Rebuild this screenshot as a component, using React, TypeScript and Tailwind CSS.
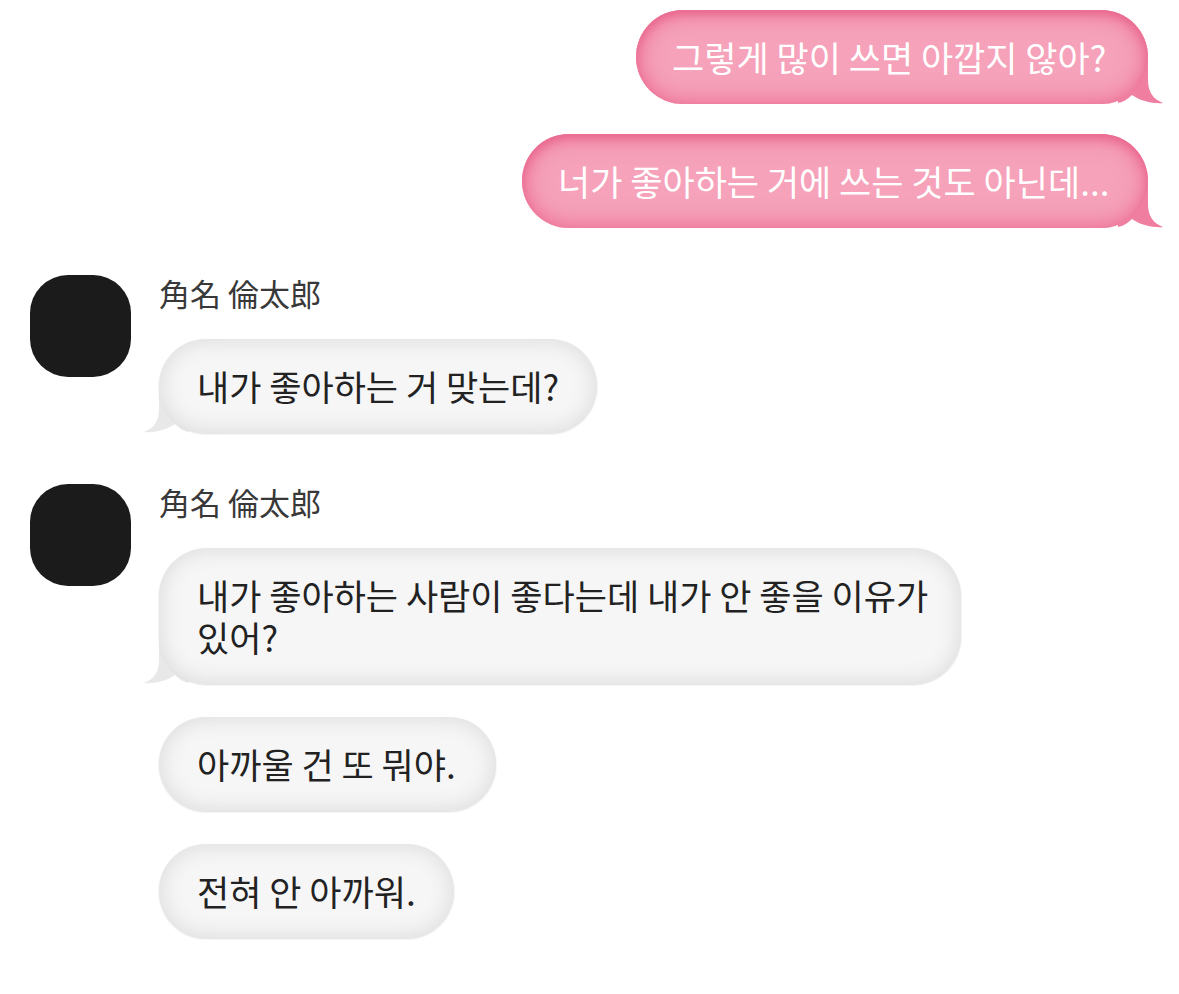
import React from "react";

const KR = "font-['Noto_Sans_CJK_KR','Noto_Sans',sans-serif]";

type Side = "left" | "right";

function Tail({ side, color }: { side: Side; color: string }) {
  // tail sits over the bubble's lower corner
  return (
    <svg
      width="45"
      height="50"
      viewBox="0 0 45 50"
      className={
        side === "right"
          ? "absolute right-[-15px] bottom-0"
          : "absolute left-[-15px] bottom-0 -scale-x-100"
      }
    >
      <path d="M0,0 L30,0 L30,26 C30,38 35,45 45,49 C36,50 22,47 14,41 C10,45 5,48 0,49 Z" fill={color} />
    </svg>
  );
}

function PinkBubble({ text, width }: { text: string; width: string }) {
  return (
    <div className={`relative ${width}`}>
      <Tail side="right" color="#ef7ea0" />
      <div
        className={`relative rounded-full bg-[#f5a2ba] shadow-[inset_0_4px_10px_#e8668d,inset_0_0_22px_4px_#ee7599] py-[26px] pl-[36px] text-[35px] leading-[42px] text-white whitespace-nowrap ${KR}`}
      >
        {text}
      </div>
    </div>
  );
}

function GrayBubble({
  children,
  width,
  tail = false,
}: {
  children: React.ReactNode;
  width: string;
  tail?: boolean;
}) {
  return (
    <div className={`relative ${width}`}>
      {tail && <Tail side="left" color="#e8e8e8" />}
      <div
        className={`relative rounded-[48px] bg-[#f6f6f6] shadow-[inset_0_0_20px_3px_#dedede,0_1px_2px_#dddddd] py-[26px] pl-[38px] text-[35px] leading-[42px] text-[#222222] whitespace-nowrap ${KR}`}
      >
        {children}
      </div>
    </div>
  );
}

function Avatar() {
  return <div className="w-[101px] h-[102px] shrink-0 rounded-[38px] bg-[#1b1b1b]" />;
}

function Sender({ children }: { children: React.ReactNode }) {
  return (
    <div className="flex">
      <Avatar />
      <div className="ml-[28px] flex flex-col">
        <div className="h-[64px] text-[31px] leading-[36px] text-[#383838] font-['Noto_Sans_CJK_JP','Noto_Sans',sans-serif]">
          角名 倫太郎
        </div>
        <div className="flex flex-col gap-[33px]">{children}</div>
      </div>
    </div>
  );
}

export default function App() {
  return (
    <div className="w-[1179px] h-[994px] bg-white pt-[10px]">
      <div className="flex flex-col items-end gap-[30px] pr-[31px]">
        <PinkBubble text="그렇게 많이 쓰면 아깝지 않아?" width="w-[512px]" />
        <PinkBubble text="너가 좋아하는 거에 쓰는 것도 아닌데..." width="w-[626px]" />
      </div>

      <div className="mt-[47px] flex flex-col gap-[51px] pl-[30px]">
        <Sender>
          <GrayBubble width="w-[438px]" tail>
            내가 좋아하는 거 맞는데?
          </GrayBubble>
        </Sender>
        <Sender>
          <GrayBubble width="w-[802px]" tail>
            <div>내가 좋아하는 사람이 좋다는데 내가 안 좋을 이유가</div>
            <div>있어?</div>
          </GrayBubble>
          <GrayBubble width="w-[337px]">아까울 건 또 뭐야.</GrayBubble>
          <GrayBubble width="w-[295px]">전혀 안 아까워.</GrayBubble>
        </Sender>
      </div>
    </div>
  );
}
